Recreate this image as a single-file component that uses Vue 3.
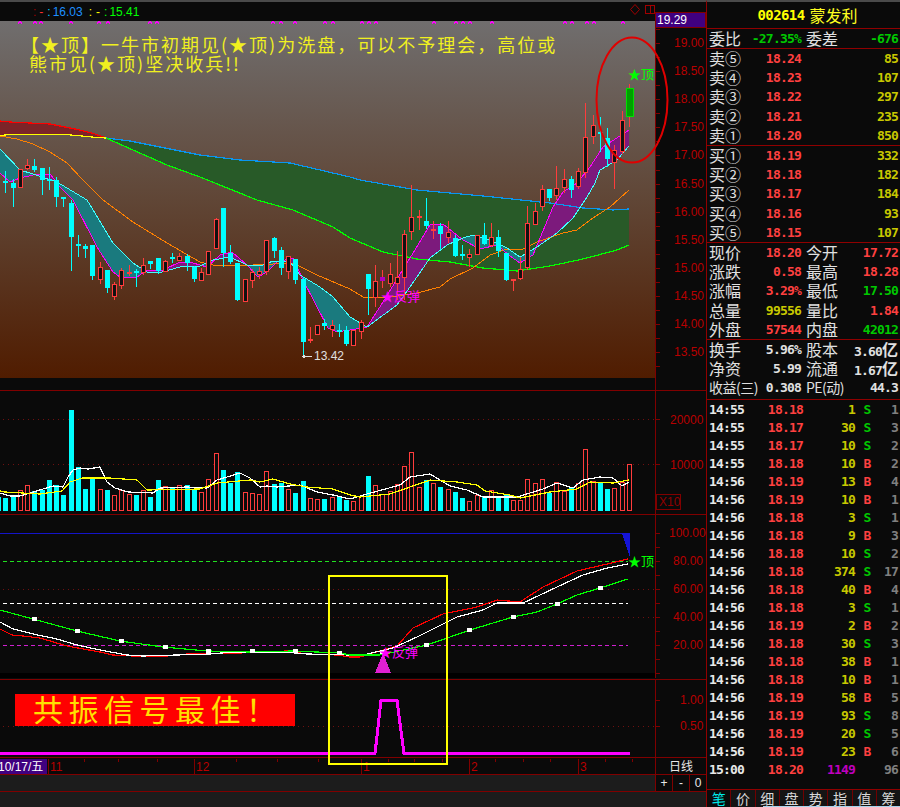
<template>
  <div class="terminal">
    <div class="chart-col">
      <div class="topbar">
        <span class="r">:</span><span class="r2">-</span>
        <span class="c">:</span><span class="b">16.03</span>
        <span class="y">:</span><span class="y">-</span>
        <span class="g">:</span><span class="g">15.41</span>
        <svg class="top-icons" width="30" height="19">
          <path d="M9 2.5 L13.5 7.5 L9 12.5 L4.5 7.5 Z" fill="none" stroke="#a00000" />
          <rect x="19.5" y="3.5" width="9" height="8" fill="none" stroke="#a00000" />
          <line x1="24.5" y1="3" x2="24.5" y2="12" stroke="#a00000" />
        </svg>
        <div class="top-price">19.29</div>
      </div>

      <!-- price pane -->
      <svg class="pane" width="706" height="369" viewBox="0 21 706 369">
        <defs>
          <linearGradient id="chartBg" x1="0" y1="0" x2="0" y2="1">
            <stop offset="0" stop-color="#706e6e" />
            <stop offset="0.5" stop-color="#604636" />
            <stop offset="1" stop-color="#501c00" />
          </linearGradient>
        </defs>
        <rect x="0" y="21" width="655" height="357" fill="url(#chartBg)" />
        <g class="crisp">
          <polygon v-for="(p, i) in longFills" :key="'lf' + i" :points="p.points" :fill="p.fill" />
          <polygon v-for="(p, i) in shortFills" :key="'sf' + i" :points="p.points" :fill="p.fill" />
          <polyline :points="pts(redBand)" class="line thick" stroke="#ff0000" />
          <polyline :points="pts(yellowBand)" class="line thick" stroke="#ffff00" />
          <polyline :points="pts(blueBand)" class="line thick" stroke="#0a96f0" />
          <polyline :points="pts(greenBand)" class="line thick" stroke="#00ff00" />
          <polyline :points="pts(orangeLine)" class="line" stroke="#ff8000" />
          <polyline :points="pts(magentaLine)" class="line" stroke="#ff00ff" />
          <polyline :points="pts(cyanLine)" class="line" stroke="#40ffff" />
          <path v-for="x in topMarks" :key="x" :d="`M${x - 2} 19.5 l4 4 m0 -4 l-4 4`" stroke="#ff00ff" fill="none" />
          <template v-for="c in candles" :key="c.i">
            <rect :x="c.x" :y="c.hi" width="1" :height="c.lo - c.hi" :fill="c.wick" />
            <rect v-if="c.kind === 'r'" :x="c.x - 1.5" :y="c.top + 0.5" width="4" :height="c.bot - c.top" fill="#111" stroke="#ff3c3c" />
            <rect v-else-if="c.kind === 'g'" :x="c.x - 3" :y="c.top" width="7" :height="c.bot - c.top" fill="#00a000" stroke="#00e000" stroke-width="1" />
            <rect v-else :x="c.x - 2" :y="c.top" width="5" :height="Math.max(c.bot - c.top, 2)" :fill="c.fill" />
          </template>
          <line x1="655.5" y1="21" x2="655.5" y2="390" class="axis" />
          <template v-for="t in priceTicks" :key="t">
            <line x1="656" :y1="t" x2="660" :y2="t" class="axis" />
          </template>
        </g>
        <text x="21" y="52" class="note">【★顶】一牛市初期见(★顶)为洗盘，可以不予理会，高位或</text>
        <text x="29" y="71" class="note">熊市见(★顶)坚决收兵!!</text>
        <text v-for="l in priceLabels" :key="l.t" x="674" :y="l.y + 4" class="tick">{{ l.t }}</text>
        <ellipse cx="632" cy="100" rx="35.5" ry="62.5" fill="none" stroke="#e00000" stroke-width="2" />
        <text x="628" y="79" class="tag green">★顶</text>
        <text x="381" y="301" class="tag pink">★反弹</text>
        <path class="crisp" d="M302 356.5 H312 M302.5 356.5 l3 -2 M302.5 356.5 l3 2" stroke="#e0e0e0" fill="none" />
        <text x="314" y="360" class="low">13.42</text>
      </svg>

      <!-- volume pane -->
      <svg class="pane ruled" width="706" height="123" viewBox="0 391 706 123">
        <g class="crisp">
          <line x1="3" y1="419.5" x2="655" y2="419.5" class="dots" />
          <line x1="3" y1="464.5" x2="655" y2="464.5" class="dots" />
          <template v-for="v in volumes" :key="v.i">
            <rect v-if="v.red" :x="v.x - 1.5" :y="510.5 - v.h" width="4" :height="v.h" fill="none" stroke="#ff3c3c" />
            <rect v-else :x="v.x - 2" :y="510 - v.h" width="5" :height="v.h + 1" fill="#00ffff" />
          </template>
          <polyline :points="pts(volWhite)" class="line thick" stroke="#ffffff" />
          <polyline :points="pts(volYellow)" class="line thick" stroke="#ffff00" />
          <line x1="655.5" y1="391" x2="655.5" y2="514" class="axis" />
          <line x1="656" y1="419.5" x2="660" y2="419.5" class="axis" />
          <line x1="656" y1="464.5" x2="660" y2="464.5" class="axis" />
          <rect x="656.5" y="494.5" width="24" height="15" fill="none" stroke="#800000" />
        </g>
        <text x="670" y="424" class="tick">20000</text>
        <text x="670" y="469" class="tick">10000</text>
        <text x="659" y="506" class="tick dim">X10</text>
      </svg>

      <!-- KDJ pane -->
      <svg class="pane ruled" width="706" height="164" viewBox="0 515 706 164">
        <g class="crisp">
          <rect x="0" y="673" width="655" height="5" fill="#000" />
          <line x1="0" y1="533.5" x2="630" y2="533.5" stroke="#1414c8" />
          <polygon points="622,533 630,533 630,558" fill="#1414d8" />
          <line x1="3" y1="561.5" x2="628" y2="561.5" class="dash" stroke="#20e020" />
          <line x1="3" y1="603.5" x2="628" y2="603.5" class="dash" stroke="#ffffff" />
          <line x1="3" y1="645.5" x2="628" y2="645.5" class="dash" stroke="#d020d0" />
          <line x1="3" y1="589.5" x2="655" y2="589.5" class="dots" />
          <line x1="3" y1="617.5" x2="655" y2="617.5" class="dots" />
          <polyline :points="pts(kdjRed)" class="line thick" stroke="#ff0000" />
          <polyline :points="pts(kdjWhite)" class="line thick" stroke="#ffffff" />
          <polyline :points="pts(kdjGreen)" class="line thick" stroke="#00ff00" />
          <rect v-for="m in kdjMarks" :key="m[0]" :x="m[0] - 2" :y="m[1] - 2" width="5" height="4" fill="#ffffff" />
          <polygon points="383,653 375,673 391,673" fill="#e020d0" />
          <line x1="655.5" y1="515" x2="655.5" y2="678" class="axis" />
          <line v-for="t in kdjTicks" :key="t" x1="656" :y1="t" x2="660" :y2="t" class="axis" />
        </g>
        <text v-for="l in kdjLabels" :key="l.t" :x="l.t.length > 5 ? 669 : 673" :y="l.y + 4" class="tick">{{ l.t }}</text>
        <text x="628" y="566" class="tag green">★顶</text>
        <text x="379" y="657" class="tag pink">★反弹</text>
      </svg>

      <!-- signal pane -->
      <svg class="pane ruled" width="706" height="77" viewBox="0 679 706 77">
        <g class="crisp">
          <line x1="3" y1="725.5" x2="655" y2="725.5" class="dots" />
          <rect x="15" y="693" width="280" height="32" fill="#ff0000" />
          <polyline points="0,752.5 375,752.5 381,699.5 397,699.5 404,752.5 630,752.5" fill="none" stroke="#ff00ff" stroke-width="3" />
          <line x1="655.5" y1="679" x2="655.5" y2="756" class="axis" />
          <line x1="656" y1="699.5" x2="660" y2="699.5" class="axis" />
          <line x1="656" y1="725.5" x2="660" y2="725.5" class="axis" />
        </g>
        <text x="33" y="720" class="banner">共振信号最佳！</text>
        <text x="680" y="703" class="tick">1.00</text>
        <text x="680" y="729" class="tick">0.50</text>
      </svg>

      <!-- date axis -->
      <div class="date-row">
        <svg width="655" height="16" viewBox="0 756 655 16">
          <rect x="0" y="757" width="47" height="15" fill="#400080" />
          <text x="-2" y="769" class="date">10/17/五</text>
          <g class="crisp">
            <line v-for="t in dateTicks" :key="t" :x1="t + 0.5" y1="757" :x2="t + 0.5" y2="760" class="axis" />
            <line v-for="m in months" :key="m.t" :x1="m.x + 0.5" y1="757" :x2="m.x + 0.5" y2="772" class="axis" />
          </g>
          <text v-for="m in months" :key="'m' + m.t" :x="m.x + 2" y="769" class="tick">{{ m.t }}</text>
        </svg>
        <div class="period">日线</div>
      </div>
      <div class="status-row">
        <div class="zoom-btns">
          <span>+</span><span>-</span><span>0</span>
        </div>
      </div>
      <div class="bottom-fill"></div>
    </div>

    <aside class="side">
      <div class="title"><b>002614</b> <span>蒙发利</span></div>
      <section class="sec one">
        <div class="row">
          <div class="cell"><i>委比</i><b class="green">-27.35%</b></div>
          <div class="cell"><i>委差</i><b class="green">-676</b></div>
        </div>
      </section>
      <section class="sec">
        <div v-for="q in asks" :key="q[0]" class="row">
          <div class="cell"><i>{{ q[0] }}</i><b class="red">{{ q[1] }}</b></div>
          <div class="cell end"><b class="olive">{{ q[2] }}</b></div>
        </div>
      </section>
      <section class="sec">
        <div v-for="q in bids" :key="q[0]" class="row">
          <div class="cell"><i>{{ q[0] }}</i><b class="red">{{ q[1] }}</b></div>
          <div class="cell end"><b class="olive">{{ q[2] }}</b></div>
        </div>
      </section>
      <section class="sec">
        <div v-for="s in stats" :key="s[0]" class="row">
          <div class="cell"><i>{{ s[0] }}</i><b :class="s[2]">{{ s[1] }}</b></div>
          <div class="cell"><i>{{ s[3] }}</i><b :class="s[5]">{{ s[4] }}</b></div>
        </div>
      </section>
      <section class="sec three">
        <div class="row">
          <div class="cell"><i>换手</i><b class="white">5.96%</b></div>
          <div class="cell"><i>股本</i><b class="white">3.60<i>亿</i></b></div>
        </div>
        <div class="row">
          <div class="cell"><i>净资</i><b class="white">5.99</b></div>
          <div class="cell"><i>流通</i><b class="white">1.67<i>亿</i></b></div>
        </div>
        <div class="row">
          <div class="cell"><i class="tight">收益(三)</i><b class="white">0.308</b></div>
          <div class="cell"><i class="tight">PE(动)</i><b class="white">44.3</b></div>
        </div>
      </section>
      <section class="trades">
        <div v-for="(t, i) in trades" :key="i" class="trade">
          <b class="t-time">{{ t[0] }}</b>
          <b class="t-price red">{{ t[1] }}</b>
          <b class="t-vol" :class="t[2] > 1000 ? 'purple' : 'olive'">{{ t[2] }}</b>
          <b class="t-side" :class="t[3] === 'S' ? 'green' : 'red'">{{ t[3] }}</b>
          <b class="t-count">{{ t[4] }}</b>
        </div>
      </section>
      <nav class="tabs">
        <span v-for="(t, i) in tabs" :key="t" :class="{ active: i === 0 }">{{ t }}</span>
      </nav>
    </aside>

    <!-- highlight box lying over the lower panes -->
    <div class="focus-box"></div>
    <div class="win-edge"></div>
  </div>
</template>

<script setup>
const candleX = (i) => Math.round(5.3 + 7.25 * i)

// hi, body top, body bottom, lo, kind (r hollow red, c cyan, s solid red, p purple, g green)
const rawCandles = [
  [171, 181, 183, 193, 'c'], [179, 183, 188, 207, 'c'], [169, 169, 187, 187, 'r'], [159, 165, 168, 170, 'r'],
  [159, 166, 170, 172, 'c'], [168, 168, 180, 195, 'c'], [167, 179, 181, 190, 'c'], [177, 180, 197, 207, 'c'],
  [197, 197, 199, 207, 'c'], [200, 203, 237, 271, 'c'], [235, 244, 246, 257, 'c'], [244, 246, 249, 258, 'c'],
  [245, 245, 276, 280, 'c'], [262, 267, 279, 284, 'r'], [270, 270, 288, 293, 'c'], [282, 284, 296, 300, 'r'],
  [268, 270, 285, 289, 'r'], [265, 272, 274, 276, 's'], [269, 271, 272, 287, 'c'], [258, 265, 272, 275, 'r'],
  [261, 261, 264, 269, 'c'], [258, 258, 271, 274, 'c'], [260, 261, 271, 271, 'r'], [253, 257, 259, 263, 'c'],
  [253, 256, 260, 261, 'r'], [254, 256, 263, 271, 'c'], [266, 267, 279, 282, 'c'], [268, 272, 280, 281, 'r'],
  [251, 251, 274, 275, 'r'], [218, 219, 248, 249, 'r'], [208, 208, 253, 267, 'c'], [245, 253, 262, 264, 'c'],
  [263, 263, 300, 301, 'c'], [279, 279, 301, 301, 'r'], [269, 272, 280, 288, 'r'], [267, 271, 274, 279, 'r'],
  [240, 240, 271, 275, 'r'], [237, 238, 251, 258, 'c'], [247, 250, 268, 275, 'c'], [256, 256, 271, 279, 'r'],
  [259, 259, 280, 284, 'c'], [277, 279, 342, 356, 'c'], [327, 339, 341, 343, 's'], [325, 325, 334, 335, 'r'],
  [319, 323, 326, 330, 'c'], [320, 325, 329, 337, 'r'], [324, 330, 331, 337, 'c'], [326, 330, 344, 346, 'c'],
  [330, 330, 345, 345, 'r'], [320, 322, 331, 339, 'r'], [274, 274, 289, 315, 'c'], [265, 281, 297, 307, 'r'],
  [270, 277, 281, 288, 'p'], [263, 274, 283, 287, 'r'], [251, 277, 283, 300, 'r'], [230, 234, 277, 300, 'r'],
  [185, 217, 231, 240, 'r'], [210, 216, 218, 230, 's'], [198, 221, 226, 229, 'c'], [221, 229, 230, 239, 's'],
  [223, 226, 234, 250, 'c'], [221, 232, 237, 243, 'r'], [235, 238, 256, 257, 'c'], [245, 254, 256, 260, 'c'],
  [249, 254, 257, 267, 'r'], [235, 235, 254, 254, 'r'], [223, 235, 244, 245, 'c'], [223, 237, 245, 247, 'r'],
  [230, 237, 251, 257, 'c'], [253, 253, 280, 281, 'c'], [279, 279, 281, 291, 's'], [257, 269, 278, 280, 'r'],
  [206, 223, 267, 270, 'r'], [203, 211, 224, 224, 'r'], [185, 189, 206, 211, 'r'], [189, 189, 198, 201, 'c'],
  [166, 188, 195, 200, 'r'], [169, 179, 187, 193, 'r'], [176, 179, 190, 198, 'c'], [168, 171, 186, 189, 'r'],
  [103, 137, 172, 178, 'r'], [115, 125, 136, 144, 'r'], [117, 132, 134, 152, 'c'], [128, 138, 159, 167, 'c'],
  [145, 150, 162, 189, 'r'], [111, 120, 151, 154, 'r'], [84, 88, 116, 127, 'g'],
]

const wickColor = { r: '#ff3c3c', s: '#ff3c3c', c: '#00ffff', p: '#ff3c3c', g: '#ff3c3c' }
const bodyColor = { s: '#ff3c3c', c: '#00ffff', p: '#b000c0' }
const candles = rawCandles.map(([hi, top, bot, lo, kind], i) => ({
  i,
  x: candleX(i),
  hi,
  top,
  bot,
  lo,
  kind,
  wick: wickColor[kind],
  fill: bodyColor[kind],
}))

// bar heights in px, negative is a falling (cyan) day
const rawVolumes = [
  -12, -13, 20, 25, -19, -20, -30, -25, -15, -100, -43, -21, -31, 21, -20, 15, 20, 16, -15, 20, -13, -30,
  24, -23, 25, -25, -21, 18, 31, 57, -40, -27, -38, 18, 17, 16, 39, -26, -27, 21, -17, -29, 12, 11, -11,
  13, -14, -10, 9, 14, -34, 25, 16, 19, 26, 44, 58, 23, -30, 27, -23, 21, -18, -12, 9, 15, -14, 20, -12,
  -15, 10, 10, 31, 27, 31, -17, 28, 19, -23, 27, 61, 29, -27, -21, 22, 28, 46,
]
const volumes = [
  { i: -1, x: -2, h: 13, red: false },
  ...rawVolumes.map((v, i) => ({ i, x: candleX(i), h: Math.abs(v), red: v > 0 })),
]

const redBand = [[0, 121], [10, 122], [30, 123], [50, 124], [65, 127], [80, 130], [95, 134], [106, 138]]
const yellowBand = [[0, 135.5], [10, 134.5], [65, 134.5], [82, 136], [97, 137.5], [106, 138]]
const blueBand = [
  [106, 138], [130, 141], [160, 147], [200, 155], [240, 160], [290, 163], [350, 177], [360, 180], [417, 190],
  [483, 196], [550, 203], [583, 208], [613, 210], [629, 209],
]
const greenBand = [
  [106, 138], [133, 150], [167, 165], [200, 177], [257, 200], [293, 210], [333, 227], [350, 238], [383, 252],
  [417, 259], [450, 262], [483, 268], [517, 271], [550, 266], [583, 259], [617, 250], [629, 245],
]
const orangeLine = [
  [0, 136], [17, 139], [33, 144], [50, 152], [67, 163], [83, 180], [103, 200], [133, 222], [167, 243],
  [200, 262], [213, 265], [233, 266], [253, 265], [293, 263], [317, 275], [350, 289], [363, 297], [383, 298],
  [417, 293], [440, 287], [450, 279], [473, 268], [490, 255], [507, 249], [523, 249], [537, 242], [563, 233],
  [577, 230], [593, 218], [610, 207], [629, 190],
]
const magentaLine = [
  [0, 173], [10, 182], [20, 178], [33, 175], [50, 174], [60, 187], [73, 200], [97, 247], [113, 272], [120, 277],
  [137, 277], [147, 270], [163, 270], [180, 262], [193, 263], [207, 267], [220, 255], [232, 252], [247, 265],
  [258, 277], [267, 272], [277, 262], [293, 258], [302, 278], [315, 303], [328, 328], [337, 332], [350, 330],
  [367, 327], [383, 302], [410, 258], [430, 225], [443, 224], [463, 240], [480, 249], [497, 245], [510, 256],
  [520, 263], [533, 255], [553, 207], [563, 192], [577, 183], [590, 167], [603, 147], [629, 130],
]
const cyanLine = [
  [0, 149], [20, 170], [33, 174], [57, 182], [87, 200], [113, 243], [133, 263], [147, 272], [158, 273],
  [180, 267], [200, 266], [213, 260], [230, 257], [247, 265], [263, 265], [273, 261], [290, 262], [300, 275],
  [320, 287], [333, 297], [350, 317], [367, 327], [397, 305], [410, 287], [430, 258], [447, 245], [463, 238],
  [473, 235], [490, 240], [507, 248], [520, 257], [537, 247], [557, 233], [573, 218], [587, 197], [595, 183],
  [600, 170], [617, 160], [629, 146],
]

const volWhite = [
  [0, 493], [10, 496], [20, 496], [30, 493], [43, 489], [53, 486], [63, 487], [68, 477], [73, 470], [80, 468],
  [88, 469], [100, 467], [107, 482], [115, 488], [128, 492], [153, 493], [160, 488], [187, 487], [207, 488],
  [217, 480], [227, 477], [240, 473], [250, 478], [260, 487], [267, 486], [277, 487], [300, 485], [317, 492],
  [333, 495], [350, 499], [367, 494], [400, 485], [410, 477], [430, 474], [440, 480], [450, 486], [467, 490],
  [483, 497], [500, 497], [517, 497], [543, 489], [557, 483], [573, 488], [583, 480], [600, 477], [613, 478],
  [622, 486], [629, 482],
]
const volYellow = [
  [0, 491], [5, 492], [40, 494], [62, 491], [70, 482], [82, 478], [110, 478], [137, 480], [147, 490], [200, 489],
  [217, 483], [250, 480], [260, 482], [273, 479], [290, 484], [307, 487], [333, 489], [350, 495], [360, 497],
  [390, 494], [410, 487], [430, 480], [457, 482], [477, 485], [485, 491], [510, 495], [520, 498], [550, 492],
  [577, 489], [590, 482], [613, 483], [629, 480],
]

const kdjGreen = [
  [0, 610], [33, 619], [77, 631], [120, 641], [163, 647], [207, 651], [250, 652], [293, 651], [340, 653],
  [350, 655], [380, 655], [427, 645], [450, 637], [470, 630], [493, 623], [513, 617], [537, 612], [557, 604],
  [577, 595], [600, 588], [628, 579],
]
const kdjWhite = [
  [0, 622], [13, 629], [33, 634], [57, 639], [77, 645], [100, 650], [127, 655], [143, 656], [210, 654],
  [233, 652], [283, 652], [307, 654], [350, 655], [363, 655], [393, 648], [417, 637], [447, 622], [457, 617],
  [483, 610], [497, 603], [523, 603], [557, 587], [583, 575], [607, 568], [628, 564],
]
const kdjRed = [
  [0, 629], [12, 635], [23, 636], [40, 638], [67, 646], [100, 652], [113, 655], [133, 656], [167, 656],
  [187, 654], [240, 653], [287, 651], [307, 654], [337, 655], [350, 657], [360, 657], [373, 653], [397, 646],
  [413, 628], [443, 614], [477, 607], [497, 600], [520, 602], [543, 587], [577, 571], [603, 565], [628, 559],
]
const kdjMarks = [
  [34, 619], [77, 631], [121, 641], [165, 647], [208, 651], [252, 651], [295, 651], [339, 653], [382, 652],
  [426, 645], [469, 630], [513, 617], [557, 604], [600, 588],
]

const pts = (list) => list.map((p) => p.join(',')).join(' ')

const valueAt = (list, x) => {
  for (let i = 1; i < list.length; i++) {
    if (x <= list[i][0]) {
      const [x0, y0] = list[i - 1]
      const [x1, y1] = list[i]
      return y0 + ((y1 - y0) * (x - x0)) / (x1 - x0)
    }
  }
  return list[list.length - 1][1]
}

// fill between two lines, colour depends on which one lies on top
const bandFill = (a, b, x0, x1, aboveFill, belowFill) => {
  const out = []
  let upper = []
  let lower = []
  let sign = null
  const flush = () => {
    if (upper.length > 1) {
      out.push({
        points: [...upper, ...lower.reverse()].map((p) => p.join(',')).join(' '),
        fill: sign ? aboveFill : belowFill,
      })
    }
  }
  for (let x = x0; x <= x1; x++) {
    const ya = valueAt(a, x)
    const yb = valueAt(b, x)
    const s = ya < yb
    if (sign !== null && s !== sign) {
      flush()
      upper = []
      lower = []
    }
    sign = s
    upper.push([x, ya])
    lower.push([x, yb])
  }
  flush()
  return out
}

const longFills = [
  ...bandFill(redBand, yellowBand, 0, 106, '#7c2428', '#7c2428'),
  ...bandFill(blueBand, greenBand, 106, 629, '#285a28', '#285a28'),
]
const shortFills = bandFill(cyanLine, magentaLine, 0, 629, '#1a7a7e', '#7c1a7c')

const topMarks = [20, 35, 41, 71, 99, 108, 150, 157, 273, 281, 295, 325, 333, 362, 369, 376, 434, 456, 463, 470, 492, 565, 572, 587, 594, 623]

const priceLabels = ['19.00', '18.50', '18.00', '17.50', '17.00', '16.50', '16.00', '15.50', '15.00', '14.50', '14.00', '13.50']
  .map((t, i) => ({ t, y: Math.round(43 + i * 28.1) }))
const priceTicks = Array.from({ length: 25 }, (_, i) => Math.round(29 + i * 14.05) + 0.5)
const kdjLabels = ['100.00', '80.00', '60.00', '40.00', '20.00'].map((t, i) => ({ t, y: 533 + i * 28 }))
const kdjTicks = Array.from({ length: 11 }, (_, i) => 533.5 + i * 14)

const months = [
  { t: '11', x: 48 },
  { t: '12', x: 194 },
  { t: '1', x: 361 },
  { t: '2', x: 469 },
  { t: '3', x: 578 },
]
const dateTicks = [84, 118, 157, 236, 277, 318, 388, 414, 442, 495, 523, 550, 605, 632]

const asks = [
  ['卖⑤', '18.24', 85],
  ['卖④', '18.23', 107],
  ['卖③', '18.22', 297],
  ['卖②', '18.21', 235],
  ['卖①', '18.20', 850],
]
const bids = [
  ['买①', '18.19', 332],
  ['买②', '18.18', 182],
  ['买③', '18.17', 184],
  ['买④', '18.16', 93],
  ['买⑤', '18.15', 107],
]
const stats = [
  ['现价', '18.20', 'red', '今开', '17.72', 'red'],
  ['涨跌', '0.58', 'red', '最高', '18.28', 'red'],
  ['涨幅', '3.29%', 'red', '最低', '17.50', 'green'],
  ['总量', '99556', 'olive', '量比', '1.84', 'red'],
  ['外盘', '57544', 'red', '内盘', '42012', 'green'],
]
const trades = [
  ['14:55', '18.18', 1, 'S', 1], ['14:55', '18.17', 30, 'S', 3], ['14:55', '18.17', 10, 'S', 2],
  ['14:55', '18.18', 10, 'B', 2], ['14:56', '18.19', 13, 'B', 4], ['14:56', '18.19', 10, 'B', 1],
  ['14:56', '18.18', 3, 'S', 1], ['14:56', '18.18', 9, 'B', 3], ['14:56', '18.18', 10, 'S', 2],
  ['14:56', '18.18', 374, 'S', 17], ['14:56', '18.18', 40, 'B', 4], ['14:56', '18.18', 3, 'S', 1],
  ['14:56', '18.19', 2, 'B', 2], ['14:56', '18.18', 30, 'S', 3], ['14:56', '18.18', 38, 'B', 1],
  ['14:56', '18.18', 10, 'B', 1], ['14:56', '18.19', 58, 'B', 5], ['14:56', '18.19', 93, 'S', 8],
  ['14:56', '18.19', 20, 'S', 5], ['14:56', '18.19', 23, 'B', 6], ['15:00', '18.20', 1149, '', 96],
]
const tabs = ['笔', '价', '细', '盘', '势', '指', '值', '筹']
</script>

<style>
html,
body {
  margin: 0;
  background: #0a0a0a;
}
</style>

<style scoped>
.terminal {
  position: relative;
  display: flex;
  width: 900px;
  height: 807px;
  overflow: hidden;
  background: #0a0a0a;
  font-family: "Liberation Sans", "Noto Sans CJK SC", sans-serif;
}

.chart-col {
  display: flex;
  flex-direction: column;
  flex: 0 0 706px;
  width: 706px;
}

.topbar {
  position: relative;
  display: flex;
  align-items: center;
  gap: 1px;
  height: 19px;
  padding-left: 33px;
  border-top: 2px solid #4a4a4a;
  font-size: 12px;
  box-sizing: content-box;
}
.topbar .r { color: #a00000; }
.topbar .r2 { color: #ff3030; margin: 0 3px 0 2px; }
.topbar .c { color: #00c8ff; margin-right: 1px; }
.topbar .b { color: #1e90ff; margin-right: 5px; }
.topbar .y { color: #ffff00; margin-right: 3px; }
.topbar .g { color: #00ff00; margin-right: 1px; }

.top-icons {
  position: absolute;
  left: 626px;
  top: 0;
}

.top-price {
  position: absolute;
  left: 655px;
  top: 10px;
  width: 51px;
  height: 16px;
  box-sizing: border-box;
  border: 1px solid #800000;
  background: #400080;
  color: #fff;
  font-size: 12px;
  line-height: 14px;
  padding-left: 1px;
}

.pane {
  display: block;
  flex: none;
  background: #0a0a0a;
}
.ruled {
  border-top: 1px solid #800000;
}

.crisp {
  shape-rendering: crispEdges;
}
.line {
  fill: none;
  stroke-width: 1;
}
.line.thick {
  stroke-width: 1.2;
}
.axis {
  stroke: #800000;
  stroke-width: 1;
}
.dots {
  stroke: #701010;
  stroke-width: 1;
  stroke-dasharray: 1 4;
}
.dash {
  stroke-width: 1;
  stroke-dasharray: 4 3;
}

.tick {
  fill: #b80000;
  font-size: 12px;
}
.tick.dim {
  fill: #900000;
}
.note {
  fill: #f0f020;
  font-family: "Noto Sans CJK SC", sans-serif;
  font-size: 18px;
  letter-spacing: 2px;
}
.tag {
  font-family: "Noto Sans CJK SC", sans-serif;
  font-size: 13px;
}
.tag.green {
  fill: #00ff00;
}
.tag.pink {
  fill: #ff00ff;
}
.low {
  fill: #e0e0e0;
  font-size: 12px;
}
.banner {
  fill: #ffe000;
  font-family: "Noto Sans CJK SC", sans-serif;
  font-size: 30px;
  letter-spacing: 5.5px;
}
.date {
  fill: #fff;
  font-size: 12px;
  font-family: "Liberation Sans", "Noto Sans CJK SC", sans-serif;
}

.date-row {
  display: flex;
  height: 16px;
  flex: none;
  border-top: 1px solid #800000;
  border-bottom: 1px solid #800000;
}
.date-row svg {
  display: block;
}
.period {
  flex: 1;
  border-left: 1px solid #800000;
  text-align: center;
  color: #e8e8e8;
  font-family: "Noto Sans CJK SC", sans-serif;
  font-size: 12px;
  line-height: 16px;
}

.status-row {
  display: flex;
  justify-content: flex-end;
  flex: none;
  height: 16px;
  background: #1c1c1c;
  border-bottom: 1px solid #800000;
}
.zoom-btns {
  display: flex;
  width: 50px;
  background: #0a0a0a;
  border-left: 1px solid #800000;
}
.zoom-btns span {
  flex: 1;
  color: #e8e8e8;
  font-size: 12px;
  line-height: 16px;
  text-align: center;
  border-left: 1px solid #800000;
}
.zoom-btns span:first-child {
  border-left: 0;
}
.bottom-fill {
  flex: 1;
  background: #1c1c1c;
}

.side {
  display: flex;
  flex-direction: column;
  flex: 1;
  border-left: 1px solid #900000;
  border-top: 2px solid #4a4a4a;
  font-family: "Noto Sans CJK SC", sans-serif;
}
.side b {
  font-family: "DejaVu Sans Mono", "Liberation Mono", monospace;
  font-size: 13px;
  font-weight: 700;
  letter-spacing: -0.8px;
}
.side i {
  font-style: normal;
  color: #e0e0e0;
  font-size: 16px;
  line-height: 19px;
}
.side i.tight {
  font-size: 14px;
  letter-spacing: -0.5px;
}
.side b i {
  font-family: "Noto Sans CJK SC", sans-serif;
  letter-spacing: 0;
}

.title {
  height: 27px;
  box-sizing: border-box;
  display: flex;
  justify-content: center;
  align-items: center;
  gap: 5px;
  color: #ffff20;
  padding-left: 8px;
  border-bottom: 1px solid #900000;
  font-size: 16px;
}
.title b {
  font-size: 14px;
  letter-spacing: -0.6px;
  color: #ffff00;
}

.sec {
  height: 97px;
  box-sizing: border-box;
  border-bottom: 1px solid #900000;
}
.sec.one {
  height: 20px;
}
.sec.three {
  height: 60px;
}
.row {
  display: flex;
  height: 19.2px;
  gap: 5px;
  padding-left: 2px;
}
.cell {
  display: flex;
  justify-content: space-between;
  align-items: center;
  flex: 0 0 92px;
  white-space: nowrap;
}
.cell.end {
  justify-content: flex-end;
}

.red { color: #ff4040; }
.green { color: #00c800; }
.olive { color: #c8c800; }
.white { color: #e0e0e0; }
.purple { color: #c000c0; }

.trades {
  flex: 1;
  padding-top: 1px;
}
.trade {
  display: grid;
  grid-template-columns: 58px 36px 52px 20px 23px;
  height: 18px;
  line-height: 18px;
  padding-left: 2px;
}
.t-time { color: #e8e8e8; }
.t-price,
.t-vol,
.t-count {
  text-align: right;
}
.t-side {
  text-align: center;
  padding-left: 4px;
}
.side .t-count { color: #808080; }

.tabs {
  display: flex;
  height: 17px;
  flex: none;
  border-top: 1px solid #900000;
  background: #141414;
  overflow: hidden;
}
.tabs span {
  flex: 1;
  text-align: center;
  color: #d8d8d8;
  font-size: 14px;
  line-height: 17px;
  border-left: 1px solid #700000;
}
.tabs span:first-child {
  border-left: 0;
}
.tabs .active {
  color: #00e8e8;
  background: #0a0a0a;
}

.focus-box {
  position: absolute;
  left: 328px;
  top: 575px;
  width: 120px;
  height: 190px;
  box-sizing: border-box;
  border: 2px solid #ffff00;
}
.win-edge {
  position: absolute;
  left: 763px;
  right: 0;
  bottom: 0;
  height: 1px;
  background: #a8d4ec;
}
</style>
